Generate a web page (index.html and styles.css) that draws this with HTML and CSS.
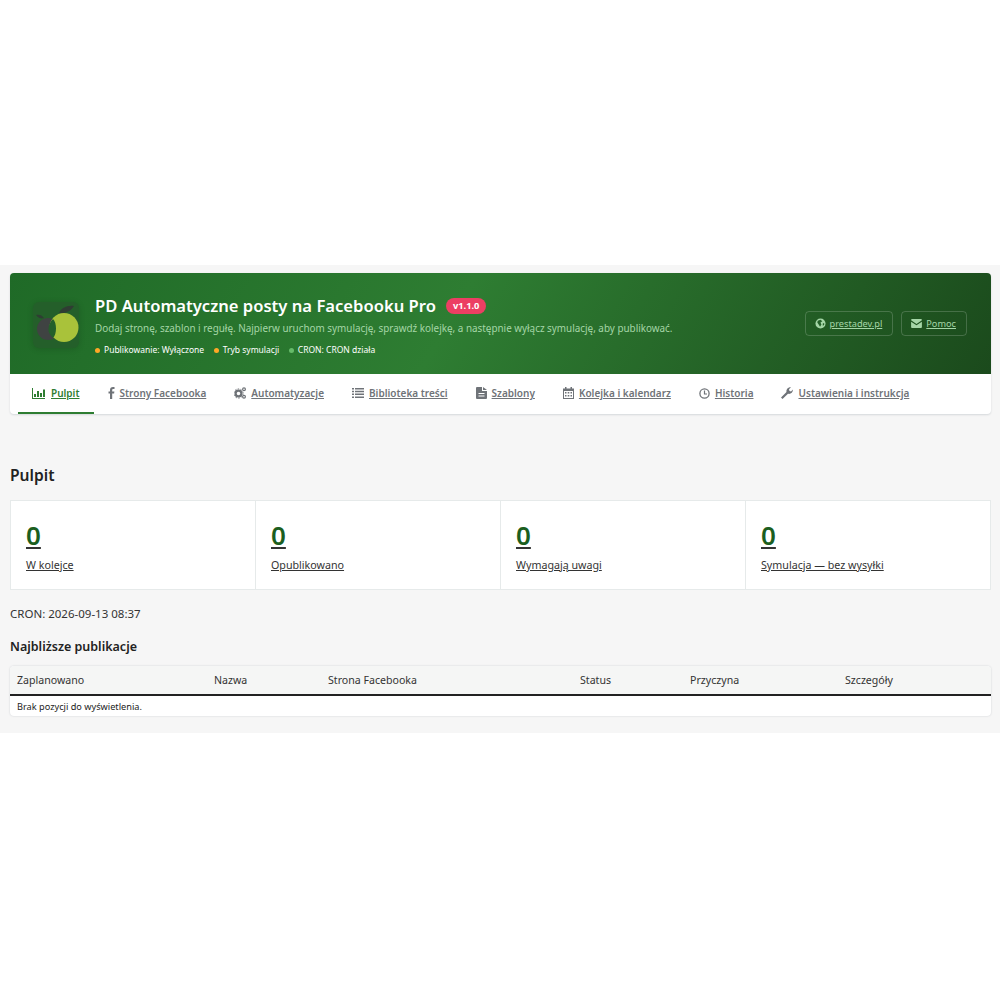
FILE: index.html
```html
<!DOCTYPE html>
<html lang="pl">
<head>
    <meta charset="UTF-8">
    <meta name="viewport" content="width=device-width, initial-scale=1.0">
    <title>PD Automatyczne posty na Facebooku Pro</title>
    <link rel="stylesheet" href="styles.css">
</head>
<body>
    <div class="page">
        <div class="module-box">
            <!-- Hero -->
            <div class="hero">
                <div class="logo">
                    <svg viewBox="0 0 46 46" width="46" height="46">
                        <path d="M26 11 C28 6 34 3 41 4 C38 9 32 12 26 11 Z" fill="#2f3d33"/>
                        <path d="M3 13 C6 12 9 13 11 16 C8 17 5 16 3 13 Z" fill="#2f3d33"/>
                        <circle cx="15" cy="27" r="11" fill="#3f4342"/>
                        <circle cx="31" cy="25.500" r="14.500" fill="#a9c23a"/>
                        <path d="M20 17 C24 21 24 32 20 36 C17 33 15 30 15.500 27 C15.500 23 17 20 20 17 Z" fill="#245f2a"/>
                    </svg>
                </div>
                <div class="hero-text">
                    <div class="hero-title">
                        <h1>PD Automatyczne posty na Facebooku Pro</h1>
                        <span class="version">v1.1.0</span>
                    </div>
                    <p class="hero-sub">Dodaj stronę, szablon i regułę. Najpierw uruchom symulację, sprawdź kolejkę, a następnie wyłącz symulację, aby publikować.</p>
                    <ul class="hero-status">
                        <li><span class="dot dot-orange"></span>Publikowanie: Wyłączone</li>
                        <li><span class="dot dot-orange"></span>Tryb symulacji</li>
                        <li><span class="dot dot-green"></span>CRON: CRON działa</li>
                    </ul>
                </div>
                <div class="hero-links">
                    <a href="#" class="hero-btn">
                        <svg viewBox="0 0 12 12" width="11" height="11"><circle cx="6" cy="6" r="5.500" fill="currentColor"/><path d="M3 3 L6 2 L8 3.500 L6 5 L7 7 L5.500 9.500 L4 7 L2.500 5 Z M8.500 6 L10 5.500 L10 7.500 L8.500 8.500 Z" fill="#25612a"/></svg>
                        <span>prestadev.pl</span>
                    </a>
                    <a href="#" class="hero-btn">
                        <svg viewBox="0 0 12 10" width="11" height="9"><path d="M0 1 Q0 0 1 0 H11 Q12 0 12 1 V1.500 L6 5.500 L0 1.500 Z M0 3 L6 7 L12 3 V9 Q12 10 11 10 H1 Q0 10 0 9 Z" fill="currentColor"/></svg>
                        <span>Pomoc</span>
                    </a>
                </div>
            </div>

            <!-- Tabs -->
            <nav class="tabs">
                <a href="#" class="tab active">
                    <svg viewBox="0 0 13 11" width="13" height="11"><path d="M0 0 H1 V10 H13 V11 H0 Z M2 6 H4 V9 H2 Z M5 3 H7 V9 H5 Z M8 5 H10 V9 H8 Z M11 1.500 H13 V9 H11 Z" fill="currentColor"/></svg>
                    <span>Pulpit</span>
                </a>
                <a href="#" class="tab">
                    <svg viewBox="0 0 7 12" width="7" height="12"><path d="M2 12 V6.500 H0.500 V4.500 H2 V3 C2 1 3 0 5 0 H6.500 V2 H5.300 C4.500 2 4.200 2.400 4.200 3.100 V4.500 H6.400 L6.100 6.500 H4.200 V12 Z" fill="currentColor"/></svg>
                    <span>Strony Facebooka</span>
                </a>
                <a href="#" class="tab">
                    <svg viewBox="0 0 12 12" width="12" height="12"><circle cx="4.500" cy="6.500" r="2.900" fill="none" stroke="currentColor" stroke-width="2.200"/><circle cx="4.500" cy="6.500" r="4.600" fill="none" stroke="currentColor" stroke-width="1" stroke-dasharray="1.500 1.400"/><circle cx="10" cy="2.300" r="1.400" fill="none" stroke="currentColor" stroke-width="1.200"/><circle cx="10" cy="9.700" r="1.400" fill="none" stroke="currentColor" stroke-width="1.200"/></svg>
                    <span>Automatyzacje</span>
                </a>
                <a href="#" class="tab">
                    <svg viewBox="0 0 12 10" width="12" height="10"><path d="M0 0 H2 V1.500 H0 Z M3 0 H12 V1.500 H3 Z M0 2.800 H2 V4.300 H0 Z M3 2.800 H12 V4.300 H3 Z M0 5.600 H2 V7.100 H0 Z M3 5.600 H12 V7.100 H3 Z M0 8.400 H2 V9.900 H0 Z M3 8.400 H12 V9.900 H3 Z" fill="currentColor"/></svg>
                    <span>Biblioteka treści</span>
                </a>
                <a href="#" class="tab">
                    <svg viewBox="0 0 11 12" width="11" height="12"><path d="M0 1 Q0 0 1 0 H6 V4 H11 V11 Q11 12 10 12 H1 Q0 12 0 11 Z M7 0 L11 3 H7 Z M2.500 6 V7 H8.500 V6 Z M2.500 8.500 V9.500 H8.500 V8.500 Z" fill="currentColor" fill-rule="evenodd"/></svg>
                    <span>Szablony</span>
                </a>
                <a href="#" class="tab">
                    <svg viewBox="0 0 11 12" width="11" height="12"><path d="M2 0 H3.500 V1.500 H7.500 V0 H9 V1.500 H11 V12 H0 V1.500 H2 Z M1 4 V11 H10 V4 Z M2 5 H3.500 V6.500 H2 Z M4.700 5 H6.300 V6.500 H4.700 Z M7.500 5 H9 V6.500 H7.500 Z M2 8 H3.500 V9.500 H2 Z M4.700 8 H6.300 V9.500 H4.700 Z M7.500 8 H9 V9.500 H7.500 Z" fill="currentColor" fill-rule="evenodd"/></svg>
                    <span>Kolejka i kalendarz</span>
                </a>
                <a href="#" class="tab">
                    <svg viewBox="0 0 11 11" width="11" height="11"><circle cx="5.500" cy="5.500" r="4.600" fill="none" stroke="currentColor" stroke-width="1.300"/><path d="M5.500 2.500 V6 H8" fill="none" stroke="currentColor" stroke-width="1.200"/></svg>
                    <span>Historia</span>
                </a>
                <a href="#" class="tab">
                    <svg viewBox="0 0 12 12" width="12" height="12"><path d="M0 10.500 L5.500 5 C5 2.500 7 0 10 0.300 L8 2.300 L8.500 4 L10 4.500 L12 2.500 C12 5.500 9.500 7.500 7 6.800 L1.500 12 Z" fill="currentColor"/></svg>
                    <span>Ustawienia i instrukcja</span>
                </a>
            </nav>
        </div>

        <h2 class="page-title">Pulpit</h2>

        <div class="stats">
            <a href="#" class="stat"><span class="stat-num">0</span><span class="stat-label">W kolejce</span></a>
            <a href="#" class="stat"><span class="stat-num">0</span><span class="stat-label">Opublikowano</span></a>
            <a href="#" class="stat"><span class="stat-num">0</span><span class="stat-label">Wymagają uwagi</span></a>
            <a href="#" class="stat"><span class="stat-num">0</span><span class="stat-label">Symulacja — bez wysyłki</span></a>
        </div>

        <p class="cron">CRON: 2026-09-13 08:37</p>

        <h3 class="section-title">Najbliższe publikacje</h3>

        <div class="table-wrap">
            <table>
                <thead>
                    <tr>
                        <th>Zaplanowano</th>
                        <th>Nazwa</th>
                        <th>Strona Facebooka</th>
                        <th>Status</th>
                        <th>Przyczyna</th>
                        <th>Szczegóły</th>
                    </tr>
                </thead>
                <tbody>
                    <tr>
                        <td colspan="6">Brak pozycji do wyświetlenia.</td>
                    </tr>
                </tbody>
            </table>
        </div>
    </div>
</body>
</html>
```

FILE: styles.css
```css
* {
    margin: 0;
    padding: 0;
    box-sizing: border-box;
}

body {
    font-family: "Noto Sans", Arial, sans-serif;
    background-color: #fff;
    display: flex;
    align-items: center;
    min-height: 100vh;
    padding-bottom: 2px;
    color: #222;
}

.page {
    width: 100%;
    height: 468px;
    background-color: #f6f6f6;
    padding: 8px 9px 0 10px;
}

.module-box {
    background-color: #fff;
    border-radius: 4px;
    overflow: hidden;
    box-shadow: 0 1px 2px rgba(30, 50, 70, 0.15);
}

.hero {
    display: flex;
    align-items: center;
    height: 101px;
    padding: 0 24px 0 23px;
    background: linear-gradient(120deg, #1f6a27 0%, #2e7d32 45%, #1b4a1c 100%);
}

.logo {
    width: 46px;
    height: 46px;
    margin: 2px 16px 0 0;
    background-color: #245f2a;
    border-radius: 6px;
    box-shadow: 0 1px 6px rgba(0, 0, 0, 0.15);
}

.logo svg {
    display: block;
}

.hero-text {
    flex: 1;
    padding-top: 5px;
}

.hero-title {
    display: flex;
    align-items: center;
    gap: 10px;
}

.hero-title h1 {
    font-size: 16.600px;
    font-weight: 600;
    color: #fff;
    line-height: 22px;
}

.version {
    background-color: #ec3f63;
    color: #fff;
    font-size: 9.300px;
    font-weight: 700;
    padding: 1px 7px;
    border-radius: 8px;
    line-height: 14px;
}

.hero-sub {
    margin-top: 3px;
    font-size: 9.900px;
    line-height: 16px;
    color: #a5d6a7;
}

.hero-status {
    display: flex;
    gap: 9.500px;
    list-style: none;
    margin-top: 7px;
    font-size: 8.500px;
    line-height: 14px;
    color: #fff;
}

.hero-status li {
    display: flex;
    align-items: center;
    gap: 4px;
}

.dot {
    width: 5px;
    height: 5px;
    border-radius: 50%;
}

.dot-orange {
    background-color: #ffa726;
}

.dot-green {
    background-color: #66bb6a;
}

.hero-links {
    display: flex;
    gap: 8px;
}

.hero-btn {
    display: flex;
    align-items: center;
    gap: 4px;
    height: 25px;
    padding: 0 10px 0 9px;
    color: #a5d6a7;
    font-size: 9.200px;
    border: 1px solid rgba(255, 255, 255, 0.18);
    border-radius: 4px;
}

.tabs {
    display: flex;
    height: 40px;
    padding-left: 8px;
}

.tab {
    display: flex;
    align-items: center;
    gap: 5px;
    padding: 0 14px;
    height: 40px;
    color: #6f7378;
    font-size: 10px;
    font-weight: 600;
    border-bottom: 2px solid transparent;
}

.tab.active {
    gap: 6px;
    color: #2e7d32;
    border-bottom-color: #2e7d32;
}

.page-title {
    font-size: 15.600px;
    font-weight: 600;
    line-height: 20px;
    margin-top: 51px;
    color: #222;
}

.stats {
    display: grid;
    grid-template-columns: repeat(4, 245px);
    margin-top: 15px;
    width: 981px;
    background-color: #fff;
    border: 1px solid #e6eaea;
}

.stat {
    display: flex;
    flex-direction: column;
    align-items: flex-start;
    height: 88px;
    padding: 17px 15px 0;
    border-right: 1px solid #e6eaea;
    color: #333;
}

.stat-num {
    font-size: 26px;
    font-weight: 600;
    line-height: 34px;
    color: #1b5e20;
}

.stat-label {
    margin-top: 5px;
    font-size: 10.700px;
    line-height: 16px;
}

.cron {
    margin-top: 16px;
    font-size: 11.500px;
    line-height: 16px;
    color: #333;
}

.section-title {
    margin-top: 16px;
    font-size: 12.500px;
    font-weight: 600;
    line-height: 18px;
    color: #222;
}

.table-wrap {
    margin-top: 10px;
    background-color: #fff;
    border-radius: 4px;
    overflow: hidden;
    box-shadow: 0 0 2px rgba(30, 50, 70, 0.2);
}

table {
    width: 100%;
    border-collapse: collapse;
    table-layout: fixed;
}

th {
    height: 29px;
    padding: 0 7px;
    text-align: left;
    font-size: 10.600px;
    font-weight: 400;
    color: #333;
    background-color: #f5f6f5;
    border-bottom: 2px solid #222;
}

th:nth-child(1) { width: 197px; }
th:nth-child(2) { width: 114px; }
th:nth-child(3) { width: 252px; }
th:nth-child(4) { width: 110px; }
th:nth-child(5) { width: 155px; }

td {
    height: 21px;
    padding: 0 7px;
    font-size: 9.200px;
    color: #222;
}
```
